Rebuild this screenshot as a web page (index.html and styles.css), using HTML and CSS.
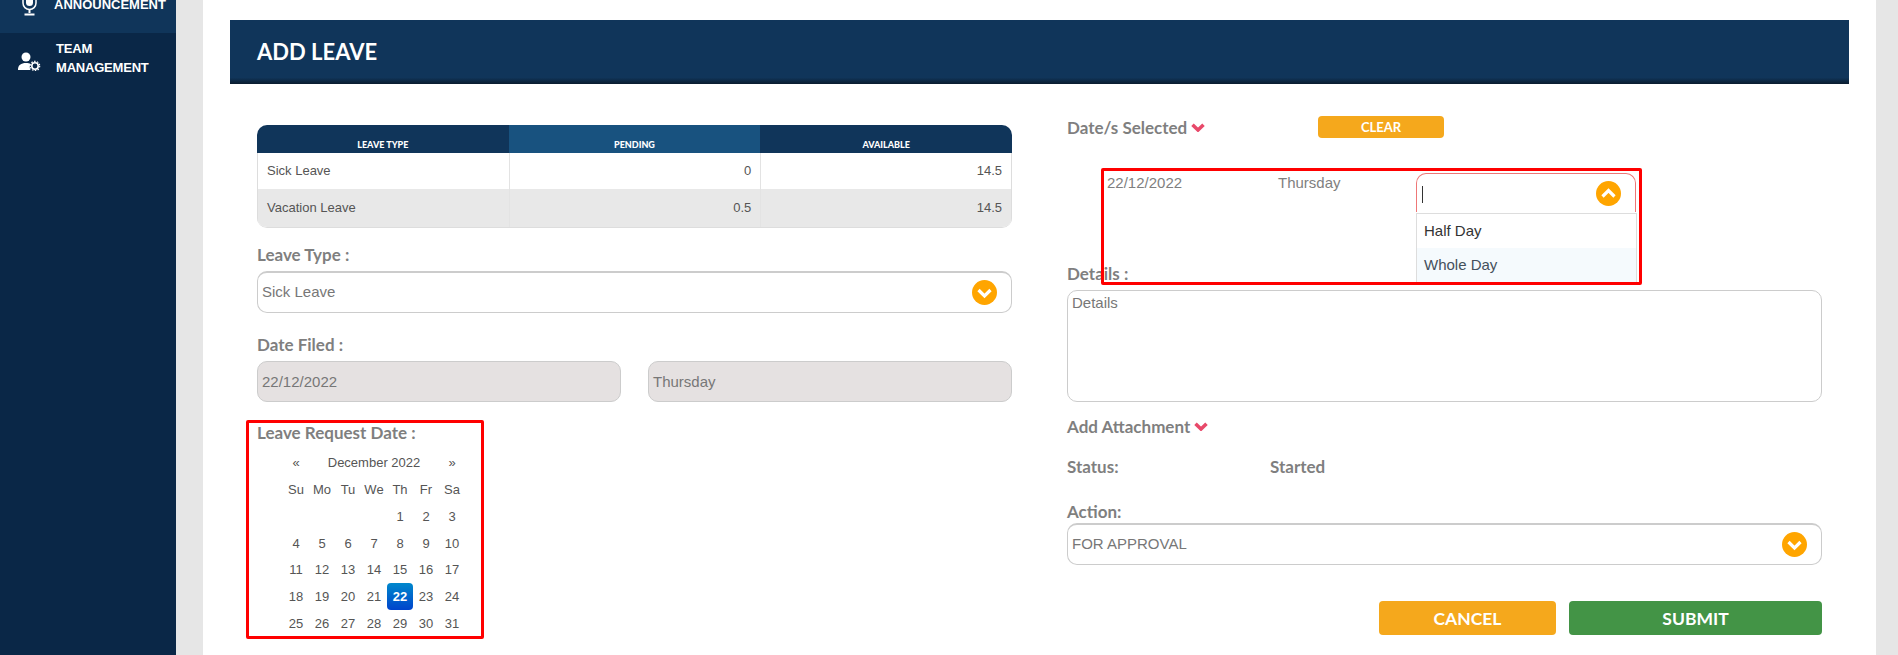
FILE: index.html
```html
<!DOCTYPE html>
<html lang="en">
<head>
    <meta charset="UTF-8">
    <title>Add Leave</title>
    <link rel="stylesheet" href="styles.css">
</head>
<body>
    <div class="app">
        <nav class="sidebar">
            <a class="nav-item nav-active">
                <svg class="icon-mic" viewBox="0 0 15 24"><rect x="4" y="0" width="7" height="14" rx="3.5" fill="#fff"/><path d="M1 8v3a6.500 6.500 0 0 0 13 0V8" fill="none" stroke="#fff" stroke-width="1.500"/><path d="M7.500 17.500V21M2.500 22.500h10" fill="none" stroke="#fff" stroke-width="2"/></svg>
                <span>ANNOUNCEMENT</span>
            </a>
            <a class="nav-item nav-team">
                <svg class="icon-team" viewBox="0 0 23 19"><circle cx="8" cy="5" r="4.500" fill="#fff"/><path d="M0 18c0-5 3-7 8-7 2 0 3.500.4 4.500 1-1 1.800-1 4 0 6z" fill="#fff"/><circle cx="17" cy="14" r="3.200" fill="none" stroke="#fff" stroke-width="1.600"/><circle cx="17" cy="14" r="4.700" fill="none" stroke="#fff" stroke-width="1.200" stroke-dasharray="1.500 1.450"/></svg>
                <span>TEAM<br>MANAGEMENT</span>
            </a>
        </nav>

        <main class="content">
            <div class="card">
                <h1 class="page-title">ADD LEAVE</h1>

                <form class="leave-form">
                    <div class="col col-left">
                        <table class="balance">
                            <thead>
                                <tr><th>LEAVE TYPE</th><th class="mid">PENDING</th><th>AVAILABLE</th></tr>
                            </thead>
                            <tbody>
                                <tr><td>Sick Leave</td><td class="num">0</td><td class="num">14.5</td></tr>
                                <tr><td>Vacation Leave</td><td class="num">0.5</td><td class="num">14.5</td></tr>
                            </tbody>
                        </table>

                        <label class="field-label label-type">Leave Type :</label>
                        <div class="select">
                            <span>Sick Leave</span>
                            <svg class="round-icon" viewBox="0 0 25 25"><circle cx="12.500" cy="12.500" r="12.500" fill="#ffa500"/><path d="M6.500 10l6 6 6-6" fill="none" stroke="#fff" stroke-width="3.200"/></svg>
                        </div>

                        <label class="field-label label-filed">Date Filed :</label>
                        <div class="date-pair">
                            <div class="readonly">22/12/2022</div>
                            <div class="readonly">Thursday</div>
                        </div>

                        <label class="field-label label-request">Leave Request Date :</label>
                        <table class="calendar">
                            <thead>
                                <tr class="month-row"><th>«</th><th colspan="5">December 2022</th><th>»</th></tr>
                                <tr><th>Su</th><th>Mo</th><th>Tu</th><th>We</th><th>Th</th><th>Fr</th><th>Sa</th></tr>
                            </thead>
                            <tbody>
                                <tr><td></td><td></td><td></td><td></td><td>1</td><td>2</td><td>3</td></tr>
                                <tr><td>4</td><td>5</td><td>6</td><td>7</td><td>8</td><td>9</td><td>10</td></tr>
                                <tr><td>11</td><td>12</td><td>13</td><td>14</td><td>15</td><td>16</td><td>17</td></tr>
                                <tr><td>18</td><td>19</td><td>20</td><td>21</td><td class="active">22</td><td>23</td><td>24</td></tr>
                                <tr><td>25</td><td>26</td><td>27</td><td>28</td><td>29</td><td>30</td><td>31</td></tr>
                            </tbody>
                        </table>

                        <div class="red-mark mark-calendar"></div>
                    </div>

                    <div class="col col-right">
                        <div class="selected-head">
                            <label class="field-label head-label">Date/s Selected
                                <svg class="chev" viewBox="0 0 14 9"><path d="M1.500 1.800L7 7l5.500-5.200" fill="none" stroke="#e8496a" stroke-width="3.600"/></svg>
                            </label>
                            <button type="button" class="btn-clear">CLEAR</button>
                        </div>

                        <div class="selected-row">
                            <span class="sel-date">22/12/2022</span>
                            <span class="sel-day">Thursday</span>
                            <div class="day-select">
                                <span class="caret"></span>
                                <svg class="round-icon" viewBox="0 0 25 25"><circle cx="12.500" cy="12.500" r="12.500" fill="#ffa500"/><path d="M6.500 15.500l6-6 6 6" fill="none" stroke="#fff" stroke-width="3.200"/></svg>
                                <ul class="menu">
                                    <li>Half Day</li>
                                    <li class="hover">Whole Day</li>
                                </ul>
                            </div>
                        </div>

                        <label class="field-label label-details">Details :</label>
                        <div class="textarea">Details</div>

                        <label class="field-label label-attach">Add Attachment
                            <svg class="chev" viewBox="0 0 14 9"><path d="M1.500 1.800L7 7l5.500-5.200" fill="none" stroke="#e8496a" stroke-width="3.600"/></svg>
                        </label>

                        <div class="status-row">
                            <label class="field-label status-name">Status:</label>
                            <span class="field-label">Started</span>
                        </div>

                        <label class="field-label label-action">Action:</label>
                        <div class="select">
                            <span>FOR APPROVAL</span>
                            <svg class="round-icon" viewBox="0 0 25 25"><circle cx="12.500" cy="12.500" r="12.500" fill="#ffa500"/><path d="M6.500 10l6 6 6-6" fill="none" stroke="#fff" stroke-width="3.200"/></svg>
                        </div>

                        <div class="actions">
                            <button type="button" class="btn btn-cancel">CANCEL</button>
                            <button type="button" class="btn btn-submit">SUBMIT</button>
                        </div>

                        <div class="red-mark mark-row"></div>
                    </div>
                </form>
            </div>
        </main>
    </div>
</body>
</html>
```

FILE: styles.css
```css
* {
    box-sizing: border-box;
}

html, body {
    margin: 0;
    height: 655px;
    overflow: hidden;
}

body {
    font-family: "Liberation Sans", Arial, sans-serif;
    background-color: #e6e6e6;
    color: #555;
}

.app {
    display: flex;
    height: 655px;
}

/* sidebar */
.sidebar {
    width: 176px;
    flex-shrink: 0;
    background-color: #0a2747;
    color: #fff;
    overflow: hidden;
}

.nav-item {
    display: flex;
    align-items: center;
    font-size: 13px;
    font-weight: bold;
    line-height: 19px;
    letter-spacing: -0.2px;
}

.nav-active {
    height: 58px;
    margin-top: -25px;
    padding-left: 22px;
    gap: 17px;
    letter-spacing: 0;
    background-color: #10355a;
}

.nav-team {
    align-items: flex-start;
    padding: 6px 0 0 18px;
    gap: 15px;
}

.icon-mic {
    width: 15px;
    height: 24px;
}

.icon-team {
    width: 23px;
    height: 19px;
    margin-top: 13px;
}

/* main card */
.content {
    flex: 1;
    padding: 0 22px 0 27px;
}

.card {
    height: 655px;
    background-color: #fff;
    padding: 20px 27px 0;
    overflow: hidden;
}

.page-title {
    margin: 0;
    height: 64px;
    padding-left: 27px;
    font-family: Lato, sans-serif;
    font-size: 22px;
    font-weight: 700;
    line-height: 64px;
    color: #fff;
    background: linear-gradient(to bottom, #10355a 90%, #0a1c2e 100%);
}

.leave-form {
    display: grid;
    grid-template-columns: 755px 755px;
    gap: 55px;
    padding: 32px 0 0 27px;
}

.col {
    position: relative;
}

.col-left {
    padding-top: 9px;
}

.field-label {
    display: block;
    font-family: Lato, sans-serif;
    font-size: 17px;
    font-weight: 700;
    line-height: 20px;
    color: #7f7f7f;
}

/* balance table */
.balance {
    width: 755px;
    height: 103px;
    table-layout: fixed;
    border-collapse: separate;
    border-spacing: 0;
    border-bottom: 1px solid #ddd;
    border-radius: 10px;
    overflow: hidden;
    font-size: 13px;
}

.balance th {
    height: 28px;
    padding: 10px 0 0;
    font-family: Lato, sans-serif;
    font-size: 9px;
    font-weight: 900;
    color: #fff;
    background-color: #10355a;
}

.balance th.mid {
    background-color: #18527f;
}

.balance td {
    padding: 0 9px 2px;
    border-left: 1px solid #e3e3e3;
}

.balance td:first-child {
    border-left: 1px solid #ddd;
}

.balance td:last-child {
    border-right: 1px solid #ddd;
}

.balance tbody tr:first-child td {
    height: 36px;
}

.balance tbody tr:last-child td {
    height: 38px;
    background-color: #e8e8e8;
}

.balance .num {
    text-align: right;
}

/* form controls */
.select {
    display: flex;
    align-items: center;
    justify-content: space-between;
    height: 42px;
    padding: 0 14px 0 4px;
    border: 1px solid #ccc;
    border-top-width: 2px;
    border-radius: 10px;
    font-size: 15px;
    color: #777;
    background-color: #fff;
}

.select span {
    margin-bottom: 2px;
}

.round-icon {
    width: 25px;
    height: 25px;
    flex-shrink: 0;
}

.label-type {
    margin: 17px 0 6px;
}

.label-filed {
    margin: 22px 0 6px;
}

.label-request {
    margin: 21px 0 6px;
}

.date-pair {
    display: flex;
    gap: 27px;
}

.readonly {
    height: 41px;
    padding: 0 4px;
    flex: 1;
    line-height: 39px;
    font-size: 15px;
    color: #777;
    background-color: #e5e1e1;
    border: 1px solid #ccc;
    border-radius: 10px;
}

.date-pair .readonly {
    flex: 0 0 364px;
}

/* calendar */
.calendar {
    margin-left: 26px;
    table-layout: fixed;
    border-collapse: separate;
    border-spacing: 0;
    font-size: 13px;
    color: #555;
}

.calendar th,
.calendar td {
    width: 26px;
    height: 26.7px;
    padding: 0;
    font-weight: normal;
    text-align: center;
}

.calendar .month-row th {
    height: 27.5px;
}

.calendar td.active {
    color: #fff;
    font-weight: bold;
    border-radius: 4px;
    background: linear-gradient(to bottom, #0088cc, #0044cc);
}

/* right column */
.selected-head {
    display: flex;
    align-items: center;
    height: 22px;
}

.head-label {
    width: 251px;
    margin-top: 2px;
}

.chev {
    width: 14px;
    height: 9px;
    margin-bottom: 2px;
}

.btn-clear {
    width: 126px;
    height: 22px;
    padding: 0;
    border: none;
    border-radius: 4px;
    font-family: Lato, sans-serif;
    font-size: 13px;
    font-weight: 700;
    color: #fff;
    background-color: #f5a81c;
}

.selected-row {
    display: flex;
    margin-top: 35px;
    padding-left: 40px;
    height: 39px;
    font-size: 15px;
    line-height: 20px;
    color: #7f7f7f;
}

.sel-date {
    width: 171px;
}

.sel-day {
    width: 138px;
}

.day-select {
    position: relative;
    display: flex;
    align-items: center;
    justify-content: space-between;
    width: 220px;
    height: 39px;
    padding: 0 14px 0 5px;
    border: 1px solid #e77;
    border-bottom: none;
    border-radius: 10px 10px 0 0;
}

.caret {
    width: 1px;
    height: 17px;
    margin-top: 3px;
    background-color: #333;
}

.menu {
    position: absolute;
    top: 39px;
    left: -1px;
    width: 221px;
    height: 70px;
    margin: 0;
    padding: 0;
    list-style: none;
    font-size: 15px;
    color: #333;
    background-color: #fff;
    border: 1px solid #ddd;
    border-bottom-color: #bbb;
}

.menu li {
    height: 34px;
    padding: 0 7px;
    line-height: 34px;
}

.menu li.hover {
    color: #44505c;
    background-color: #f5fafd;
}

.label-details {
    margin: 52px 0 6px;
}

.textarea {
    height: 112px;
    padding: 4px;
    border: 1px solid #ccc;
    border-radius: 10px;
    font-size: 15px;
    line-height: 16px;
    color: #777;
}

.label-attach {
    margin-top: 15px;
}

.status-row {
    display: flex;
    margin-top: 20px;
}

.status-name {
    width: 203px;
}

.label-action {
    margin: 25px 0 1px;
}

.actions {
    display: flex;
    justify-content: flex-end;
    gap: 13px;
    margin-top: 36px;
}

.btn {
    height: 34px;
    border: none;
    border-radius: 4px;
    font-family: Lato, sans-serif;
    font-size: 17.5px;
    font-weight: 700;
    color: #fff;
}

.btn-cancel {
    width: 177px;
    background-color: #f5a81c;
}

.btn-submit {
    width: 253px;
    background-color: #439446;
}

/* red annotation boxes drawn over the form */
.red-mark {
    position: absolute;
    border: 3px solid #f00;
    border-radius: 2px;
    pointer-events: none;
}

.mark-calendar {
    left: -11px;
    top: 304px;
    width: 238px;
    height: 219px;
}

.mark-row {
    left: 34px;
    top: 52px;
    width: 541px;
    height: 117px;
}
```
